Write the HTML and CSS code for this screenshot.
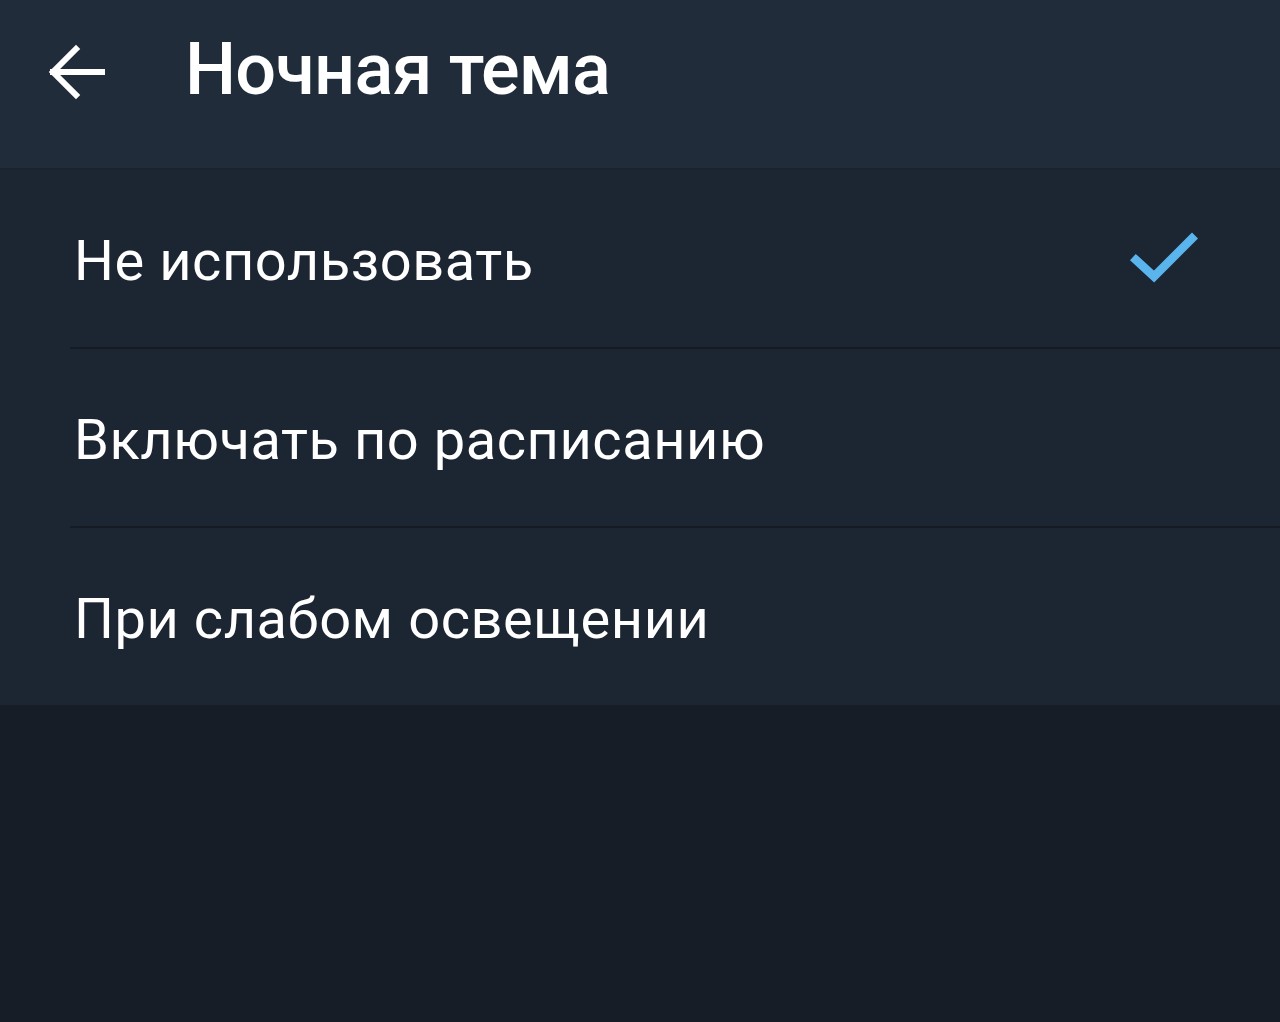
FILE: index.html
```html
<!DOCTYPE html>
<html lang="ru">
<head>
<meta charset="utf-8">
<link rel="stylesheet" href="styles.css">
</head>
<body>
<header class="appbar">
  <span class="back">
    <svg width="64" height="64" viewBox="0 0 64 64"><path d="M58 32H9M32 9L9 32l23 23" fill="none" stroke="#fff" stroke-width="6" stroke-linecap="square" stroke-linejoin="miter"/></svg>
  </span>
  <h1 class="title">Ночная тема</h1>
</header>
<ul class="list">
  <li class="row"><span class="label">Не использовать</span>
    <svg class="check" width="80" height="60" viewBox="0 0 80 60"><path d="M18 31l18 16.5 38-38" fill="none" stroke="#5ab5ec" stroke-width="8.5" stroke-linecap="square"/></svg>
  </li>
  <li class="row"><span class="label">Включать по расписанию</span></li>
  <li class="row"><span class="label">При слабом освещении</span></li>
</ul>
</body>
</html>
```
FILE: styles.css
```css
html, body { margin: 0; padding: 0; }
body {
  background: #161d27;
  font-family: Roboto, "Noto Sans", sans-serif;
  color: #ffffff;
  height: 1022px;
  overflow: hidden;
}
.appbar {
  height: 168px;
  background: #212c3a;
  display: flex;
  align-items: center;
  box-sizing: border-box;
  padding-left: 44px;
  padding-bottom: 30px;
}
.back { display: flex; width: 64px; height: 64px; margin-right: 77px; margin-top: 6px; }
.title {
  margin: 0;
  font-size: 72px;
  font-weight: 500;
  letter-spacing: -0.8px;
}
.list {
  list-style: none;
  margin: 0;
  padding: 0;
  background: #1c2532;
  border-top: 2px solid #1a222d;
}
.row {
  height: 177px;
  display: flex;
  align-items: center;
  justify-content: space-between;
  padding-left: 74px;
  padding-right: 82px;
}
.row + .row { border-top: 2px solid #141b24; margin-left: 70px; padding-left: 4px; }
.label { font-size: 56px; font-weight: 400; margin-top: 4px; letter-spacing: 0.55px; }
```
